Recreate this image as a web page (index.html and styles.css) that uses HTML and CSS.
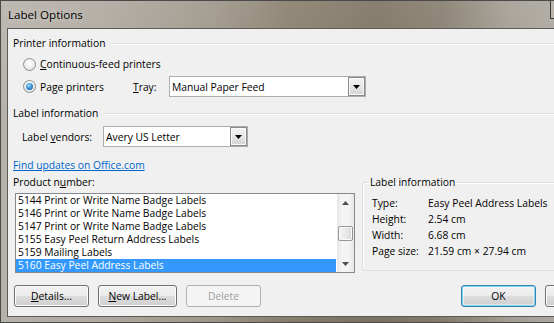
FILE: index.html
```html
<!DOCTYPE html>
<html>
<head>
<meta charset="utf-8">
<link rel="stylesheet" href="styles.css">
</head>
<body>
<div class="window">
  <div class="titlebar">
    <span class="title">Label Options</span>
    <span class="capbtn"></span>
  </div>
  <div class="frame">
    <div class="client">
      <div class="group-head"><span>Printer information</span><span class="rule"></span></div>
      <div class="radio-row first">
        <span class="radio"></span><span class="rtext"><u>C</u>ontinuous-feed printers</span>
      </div>
      <div class="radio-row second">
        <div class="radio-group"><span class="radio checked"></span><span class="rtext">Pa<u>g</u>e printers</span></div>
        <span class="tray-label"><u>T</u>ray:</span>
        <div class="combo tray"><span class="combo-text">Manual Paper Feed</span><span class="drop"><svg width="7" height="4" viewBox="0 0 7 4"><path d="M0 0H7L3.5 4Z" fill="#000"/></svg></span></div>
      </div>
      <div class="group-head second-head"><span>Label information</span><span class="rule"></span></div>
      <div class="vendor-row">
        <span class="vendor-label">Label <u>v</u>endors:</span>
        <div class="combo vendor"><span class="combo-text">Avery US Letter</span><span class="drop"><svg width="7" height="4" viewBox="0 0 7 4"><path d="M0 0H7L3.5 4Z" fill="#000"/></svg></span></div>
      </div>
      <a class="link">Find updates on Office.com</a>
      <div class="bottom-area">
        <div class="product">
          <div class="product-label">Product n<u>u</u>mber:</div>
          <div class="list">
            <div class="items">
              <div class="item">5144 Print or Write Name Badge Labels</div>
              <div class="item">5146 Print or Write Name Badge Labels</div>
              <div class="item">5147 Print or Write Name Badge Labels</div>
              <div class="item">5155 Easy Peel Return Address Labels</div>
              <div class="item">5159 Mailing Labels</div>
              <div class="item selected">5160 Easy Peel Address Labels</div>
            </div>
            <div class="vscroll">
              <div class="sb-arrow"><svg width="7" height="4" viewBox="0 0 7 4"><path d="M0 4H7L3.5 0Z" fill="#4d4d4d"/></svg></div>
              <div class="sb-track"><div class="thumb"></div></div>
              <div class="sb-arrow"><svg width="7" height="4" viewBox="0 0 7 4"><path d="M0 0H7L3.5 4Z" fill="#4d4d4d"/></svg></div>
            </div>
          </div>
        </div>
        <fieldset class="info">
          <legend>Label information</legend>
          <div class="info-grid">
            <span>Type:</span><span>Easy Peel Address Labels</span>
            <span>Height:</span><span>2.54 cm</span>
            <span>Width:</span><span>6.68 cm</span>
            <span>Page size:</span><span>21.59 cm × 27.94 cm</span>
          </div>
        </fieldset>
      </div>
      <div class="buttons">
        <button class="btn details"><u>D</u>etails...</button>
        <button class="btn newlabel"><u>N</u>ew Label...</button>
        <button class="btn disabled">Delete</button>
        <button class="btn ok default">OK</button>
        <button class="btn cancel"></button>
      </div>
    </div>
  </div>
</div>
</body>
</html>
```
FILE: styles.css
```css
* { box-sizing: border-box; }
html, body { margin: 0; padding: 0; }
body {
  width: 554px;
  height: 323px;
  overflow: hidden;
  font-family: "Open Sans", "Noto Sans", sans-serif;
  font-size: 10.3px;
  color: #000;
  background: #fff;
}
.window {
  width: 554px;
  height: 323px;
  display: flex;
  flex-direction: column;
  border: 1px solid #4a4a4a;
  border-right: none;
  overflow: hidden;
  background:
    linear-gradient(180deg, rgba(255,255,255,0.10) 0%, rgba(255,255,255,0) 40%),
    linear-gradient(90deg, #b6b1a9 0%, #aea89f 18%, #9d9588 38%, #877d6b 52%, #7b7160 68%, #857c6d 80%, #a39d93 92%, #aaa69e 100%);
}
.titlebar {
  height: 27px;
  flex: none;
  display: flex;
  align-items: center;
  padding-left: 7px;
}
.title {
  font-size: 11.6px;
  color: #000;
  text-shadow: 0 0 6px rgba(255,255,255,0.6);
}
.capbtn {
  margin-left: auto;
  align-self: flex-start;
  width: 4px;
  height: 18px;
  border-left: 1px solid #3a3a3a;
  border-bottom: 1px solid #3a3a3a;
  background: #b9b4ac;
}
.frame {
  flex: 1;
  padding: 0 0 5px 6px;
  display: flex;
}
.client {
  width: 640px;
  flex: none;
  border: 1px solid #5e5a54;
  background: #f0f0f0;
  padding: 7px 0 0 5px;
  display: flex;
  flex-direction: column;
}
.group-head {
  height: 14px;
  display: flex;
  align-items: center;
  gap: 6px;
  white-space: nowrap;
}
.group-head .rule {
  flex: 1;
  height: 1px;
  background: #d5dfe5;
  box-shadow: 0 1px 0 #fff;
}
.second-head { margin-top: 9px; }
.radio-row {
  display: flex;
  align-items: center;
  padding-left: 10px;
  white-space: nowrap;
}
.radio-row.first { margin-top: 7px; height: 14px; }
.radio-row.second { margin-top: 5px; height: 21px; }
.radio-group { display: flex; align-items: center; width: 110px; }
.radio {
  width: 13px;
  height: 13px;
  border-radius: 50%;
  border: 1px solid #8e8f8f;
  background: radial-gradient(circle at 50% 40%, #ffffff 0%, #f4f4f4 40%, #d4d4d4 100%);
  margin-right: 4px;
  display: flex;
  align-items: center;
  justify-content: center;
  flex: none;
}
.radio.checked::after {
  content: "";
  width: 7px;
  height: 7px;
  border-radius: 50%;
  background: radial-gradient(circle at 40% 35%, #a6dcff 0%, #3c93d8 45%, #14508f 100%);
}
.tray-label { width: 36px; }
.combo {
  height: 21px;
  border: 1px solid #abadb3;
  background: #fff;
  display: flex;
  align-items: center;
  padding-left: 2px;
}
.combo-text { flex: 1; white-space: nowrap; }
.combo.tray { width: 197px; }
.combo.vendor { width: 145px; }
.drop {
  width: 17px;
  height: 19px;
  border: 1px solid #8a8a8a;
  background: linear-gradient(180deg, #f4f4f4 0%, #e6e6e6 50%, #d4d4d4 100%);
  display: flex;
  align-items: center;
  justify-content: center;
  box-shadow: inset 0 0 0 1px #fafafa;
}
.vendor-row {
  margin-top: 6px;
  height: 21px;
  display: flex;
  align-items: center;
  padding-left: 9px;
  white-space: nowrap;
}
.vendor-label { width: 81px; }
.link {
  margin-top: 11px;
  height: 14px;
  line-height: 14px;
  color: #0066cc;
  text-decoration: underline;
  align-self: flex-start;
}
.bottom-area {
  margin-top: 3px;
  display: flex;
  height: 98px;
}
.product { width: 342px; display: flex; flex-direction: column; }
.product-label { height: 14px; line-height: 14px; }
.list {
  margin-top: 4px;
  margin-left: 2px;
  width: 340px;
  height: 80px;
  border: 1px solid #828790;
  background: #fff;
  display: flex;
}
.items { flex: 1; padding-right: 1px; }
.item {
  height: 13px;
  line-height: 13px;
  padding-left: 2px;
  white-space: nowrap;
}
.item.selected { background: #3399ff; color: #fff; }
.vscroll {
  width: 17px;
  display: flex;
  flex-direction: column;
  background: linear-gradient(90deg, #e6e6e6 0%, #f4f4f4 30%, #f4f4f4 70%, #e6e6e6 100%);
}
.sb-arrow {
  height: 17px;
  display: flex;
  align-items: center;
  justify-content: center;
}
.sb-track { flex: 1; padding-top: 15px; }
.thumb {
  margin-left: 1px;
  width: 15px;
  height: 15px;
  border: 1px solid #979797;
  border-radius: 2px;
  background: linear-gradient(90deg, #f5f5f5 0%, #e9e9e9 50%, #d8d8d8 100%);
  box-shadow: inset 0 0 0 1px #fbfbfb;
}
.info {
  margin: 0 0 0 7px;
  padding: 0 0 0 5px;
  width: 260px;
  height: 96px;
  border: 1px solid #d5dfe5;
  border-radius: 3px;
  box-shadow: inset 1px 1px 0 #fff;
  min-width: 0;
}
.info legend {
  padding: 0 2px;
  height: 14px;
  line-height: 14px;
}
.info-grid {
  margin: 6px 0 0 4px;
  display: grid;
  grid-template-columns: 56px auto;
  grid-auto-rows: 16px;
  align-items: center;
  white-space: nowrap;
}
.buttons {
  margin-top: 12px;
  padding-left: 1px;
  display: flex;
  gap: 9px;
}
.btn {
  font-family: inherit;
  font-size: 10.3px;
  color: #000;
  height: 22px;
  width: 75px;
  padding: 0;
  border: 1px solid #707070;
  border-radius: 3px;
  background: linear-gradient(180deg, #f2f2f2 0%, #ebebeb 49%, #dddddd 50%, #cfcfcf 100%);
  box-shadow: inset 0 0 0 1px #fcfcfc;
}
.btn.newlabel { width: 79px; }
.btn.disabled {
  color: #a0a0a0;
  border-color: #adb2b5;
  background: #f4f4f4;
  box-shadow: none;
}
.btn.ok { margin-left: 191px; }
.btn.default {
  border-color: #3c7fb1;
  box-shadow: inset 0 0 0 1px #7fd3f5, inset 0 0 0 2px rgba(255,255,255,0.4);
  background: linear-gradient(180deg, #f2f2f2 0%, #ebebeb 49%, #dddddd 50%, #cfcfcf 100%);
}
```
